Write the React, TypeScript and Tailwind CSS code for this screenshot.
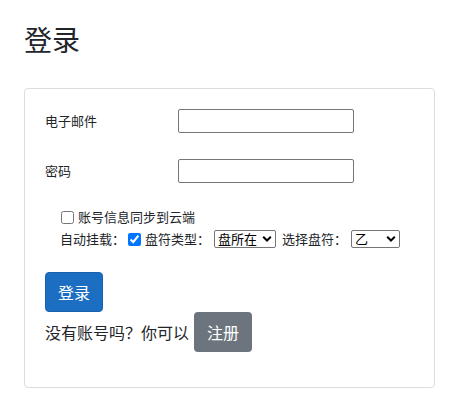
import React from "react";

function Chevron() {
  return (
    <svg
      className="pointer-events-none absolute right-[4px] top-1/2 -translate-y-1/2"
      width="10"
      height="7"
      viewBox="0 0 10 7"
    >
      <path d="M1.2 1.3 L5 5 L8.8 1.3" fill="none" stroke="#000" strokeWidth="2" />
    </svg>
  );
}

function Select({ value, w }: { value: string; w: string }) {
  return (
    <span className={`relative inline-block ${w}`}>
      <select className="appearance-none w-full h-[18px] pl-[3px] pr-0 border border-[#767676] rounded-[2px] bg-white text-[13px] leading-[16px] text-black">
        <option>{value}</option>
      </select>
      <Chevron />
    </span>
  );
}

export default function App() {
  const font = { fontFamily: '"Noto Sans CJK SC", "Noto Sans", sans-serif' };
  return (
    <div className="w-[460px] h-[412px] bg-white text-[#212529] pl-6 pr-[25px]" style={font}>
      <h1 className="pt-[21px] h-[88px] text-[28px] leading-[36px] font-normal">登录</h1>
      <div className="h-[300px] border border-[#dcdcdc] rounded-[4px] pl-5 pt-5">
        <div className="grid grid-cols-[133px_176px] items-center gap-y-[26px] text-[13px]">
          <label>电子邮件</label>
          <input type="text" className="h-6 border border-[#767676] rounded-[2px]" />
          <label>密码</label>
          <input type="password" className="h-6 border border-[#767676] rounded-[2px]" />
        </div>
        <div className="pl-[15px] mt-[24px] text-[13px] leading-[20px]">
          <div className="flex items-center">
            <input type="checkbox" className="w-[13px] h-[13px] mr-[4px] ml-[1px]" />
            <span>账号信息同步到云端</span>
          </div>
          <div className="flex items-center mt-[2px] h-[20px]">
            <span>自动挂载：</span>
            <input type="checkbox" defaultChecked className="w-[13px] h-[13px] ml-[3px] mr-[4px] accent-[#0075ff]" />
            <span>盘符类型：</span>
            <span className="ml-[4px] flex">
              <Select value="盘所在" w="w-[62px]" />
            </span>
            <span className="ml-[6px]">选择盘符：</span>
            <span className="ml-[4px] flex">
              <Select value="乙" w="w-[49px]" />
            </span>
          </div>
        </div>
        <button className="mt-[23px] h-10 w-[58px] bg-[#1b6ec2] border border-[#1861ac] rounded-[4px] text-white text-base">
          登录
        </button>
        <div className="flex items-center h-10 text-[16px]">
          <span className="mr-[5px]">没有账号吗？你可以</span>
          <button className="h-10 w-[58px] bg-[#6c757d] rounded-[4px] text-white text-base">注册</button>
        </div>
      </div>
    </div>
  );
}
